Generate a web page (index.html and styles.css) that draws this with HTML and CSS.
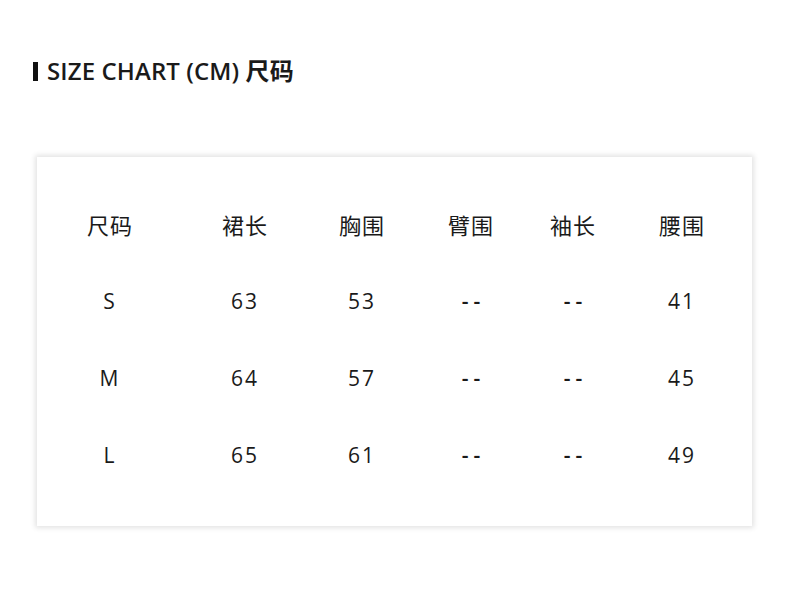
FILE: index.html
```html
<!DOCTYPE html>
<html lang="zh">
<head>
<meta charset="utf-8">
<link rel="stylesheet" href="styles.css">
</head>
<body>
<div class="page">
  <h1 class="title"><span class="bar"></span>SIZE CHART (CM) 尺码</h1>
  <div class="card">
    <div class="grid">
      <div class="cell head">尺码</div><div class="cell head">裙长</div><div class="cell head">胸围</div><div class="cell head">臂围</div><div class="cell head">袖长</div><div class="cell head">腰围</div>
      <div class="cell">S</div><div class="cell">63</div><div class="cell">53</div><div class="cell dash">--</div><div class="cell dash">--</div><div class="cell">41</div>
      <div class="cell">M</div><div class="cell">64</div><div class="cell">57</div><div class="cell dash">--</div><div class="cell dash">--</div><div class="cell">45</div>
      <div class="cell">L</div><div class="cell">65</div><div class="cell">61</div><div class="cell dash">--</div><div class="cell dash">--</div><div class="cell">49</div>
    </div>
  </div>
</div>
</body>
</html>
```
FILE: styles.css
```css
* { box-sizing: border-box; }
html, body { margin: 0; padding: 0; background: #fff; }
.page {
  width: 790px;
  height: 605px;
  padding: 57px 0 0 33px;
  font-family: "Open Sans", "Noto Sans CJK SC", sans-serif;
  color: #111;
}
.title {
  display: flex;
  align-items: center;
  margin: 0;
  font-size: 24px;
  font-weight: 600;
  line-height: 28px;
  letter-spacing: 0.1px;
  color: #1a1a1a;
}
.bar {
  width: 5px;
  height: 19px;
  background: #111;
  margin-right: 9px;
}
.card {
  margin-top: 72px;
  margin-left: 4px;
  width: 715px;
  height: 369px;
  background: #fff;
  box-shadow: 0 0 5px 2px #e4e4e4;
  padding-top: 28px;
}
.grid {
  display: grid;
  grid-template-columns: 146px 124px 110px 108px 96px 122px;
  grid-auto-rows: 77px;
}
.cell {
  display: flex;
  align-items: center;
  justify-content: center;
  font-size: 21px;
  letter-spacing: 2px;
  color: #1a1a1a;
  font-family: "Open Sans", "Noto Sans CJK SC", sans-serif;
}
.dash {
  letter-spacing: 5px;
  font-weight: 600;
  padding-left: 5px;
}
.head {
  font-family: "Noto Sans CJK SC", sans-serif;
  font-weight: 400;
  font-size: 22px;
  letter-spacing: 1px;
}
```
